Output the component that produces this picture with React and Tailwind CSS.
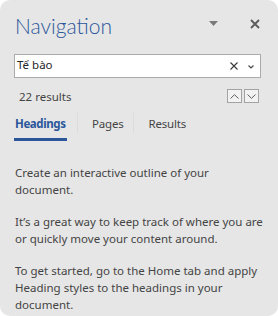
import React from "react";

const ui = { fontFamily: '"Noto Sans", "Open Sans", sans-serif' };
const title = { fontFamily: 'Lato, "Noto Sans", sans-serif' };

function Chevron({ up }) {
  return (
    <div className="w-[15px] h-[14px] border border-[#a3a3a3] bg-[#f2f2f2] flex items-center justify-center">
      <svg width="9" height="5" viewBox="0 0 9 5">
        <path
          d={up ? "M0.5 4.5 L4.5 0.7 L8.5 4.5" : "M0.5 0.5 L4.5 4.3 L8.5 0.5"}
          stroke="#5f5f5f"
          strokeWidth="1"
          fill="none"
        />
      </svg>
    </div>
  );
}

export default function App() {
  return (
    <div className="w-[278px] h-[316px] bg-white" style={ui}>
      <div className="w-full h-full bg-[#e6e6e6] rounded-[10px] flex flex-col text-[#444444] text-[11.5px]">
        {/* header */}
        <div className="flex items-start h-[46px] pl-[15px] pr-[18px] pt-[13px]">
          <span className="text-[21px] font-light leading-[26px] text-[#2b579a]" style={title}>
            Navigation
          </span>
          <div className="flex-1" />
          <svg width="9" height="5" viewBox="0 0 9 5" className="mt-[8px] mr-[32px]">
            <path d="M0 0 H9 L4.5 5 Z" fill="#7a7a7a" />
          </svg>
          <svg width="10" height="10" viewBox="0 0 10 10" className="mt-[6px]">
            <path d="M1 1 L9 9 M9 1 L1 9" stroke="#5c5c5c" strokeWidth="1.9" />
          </svg>
        </div>

        {/* search box */}
        <div className="pl-[14px] mt-[8px]">
          <div className="h-[24px] w-[247px] bg-white border border-[#ababab] flex items-start pl-[2px] pr-[6px] pt-[2px]">
            <span className="leading-[15px] text-[#262626]">Tế bào</span>
            <div className="flex-1" />
            <svg width="8" height="8" viewBox="0 0 8 8" className="mt-[5px] mr-[10px]">
              <path d="M0.5 0.5 L7.5 7.5 M7.5 0.5 L0.5 7.5" stroke="#3a3a3a" strokeWidth="1.1" />
            </svg>
            <svg width="6" height="4" viewBox="0 0 6 4" className="mt-[8px]">
              <path d="M0.5 0.5 L3 3 L5.5 0.5" stroke="#444" strokeWidth="1.1" fill="none" />
            </svg>
          </div>
        </div>

        {/* result count + prev/next */}
        <div className="flex items-start pl-[19px] pr-[19px] mt-[11px]">
          <span className="leading-[15px]">22 results</span>
          <div className="flex-1" />
          <div className="flex gap-[2px]">
            <Chevron up />
            <Chevron />
          </div>
        </div>

        {/* tabs */}
        <div className="flex items-start pl-[14px] mt-[9px]">
          <div className="flex flex-col pt-[3px] w-[53px]">
            <span className="font-bold text-[#2b579a] leading-[15px] pl-[1px] tracking-[-0.4px] whitespace-nowrap">
              Headings
            </span>
            <div className="h-[3px] bg-[#2b579a] mt-[7px]" />
          </div>
          <div className="w-px h-[20px] bg-[#dcdcdc] ml-[10px]" />
          <span className="leading-[15px] pt-[3px] ml-[14px] tracking-[-0.2px]">Pages</span>
          <div className="w-px h-[20px] bg-[#dcdcdc] ml-[10px]" />
          <span className="leading-[15px] pt-[3px] ml-[14px] tracking-[-0.2px]">Results</span>
        </div>

        {/* empty-state help text */}
        <div className="pl-[15px] mt-[23px] leading-[17px] whitespace-nowrap flex flex-col gap-[15px]">
          <p>
            Create an interactive outline of your
            <br />
            document.
          </p>
          <p>
            It’s a great way to keep track of where you are
            <br />
            or quickly move your content around.
          </p>
          <p>
            To get started, go to the Home tab and apply
            <br />
            Heading styles to the headings in your
            <br />
            document.
          </p>
        </div>
      </div>
    </div>
  );
}
